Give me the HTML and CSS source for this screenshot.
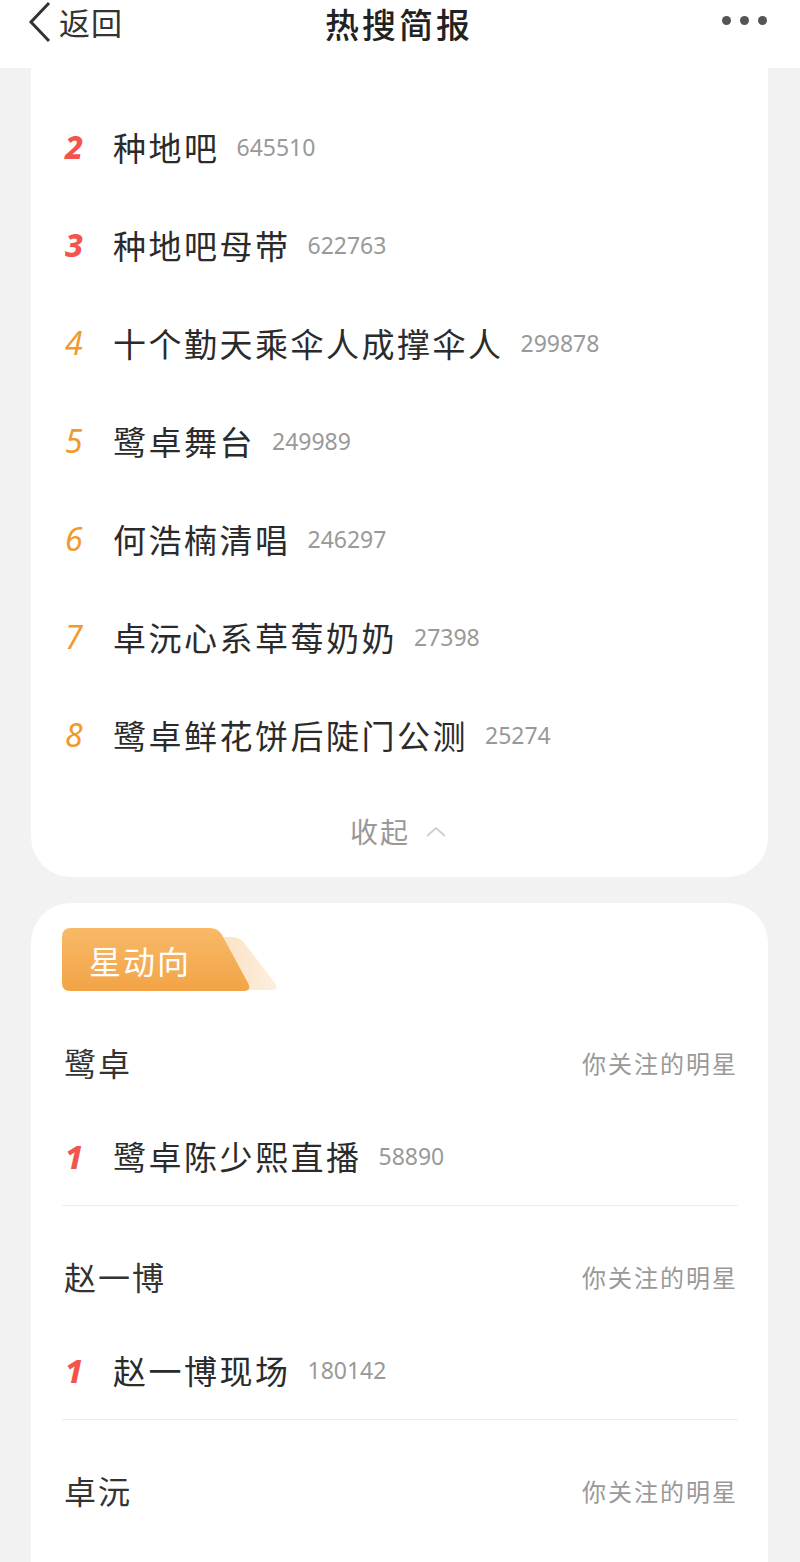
FILE: index.html
```html
<!DOCTYPE html>
<html lang="zh-CN">
<head>
<meta charset="utf-8">
<title>热搜简报</title>
<link rel="stylesheet" href="styles.css">
</head>
<body>
<div class="page">
  <header class="topbar">
    <div class="back">
      <svg class="back-icon" width="24" height="42" viewBox="0 0 24 42"><polyline points="21,2 3,21 21,40" fill="none" stroke="#333" stroke-width="3" stroke-linejoin="miter"/></svg>
      <span class="back-text">返回</span>
    </div>
    <div class="title">热搜简报</div>
    <div class="more"><i></i><i></i><i></i></div>
  </header>

  <section class="card card-top">
    <ul class="hot-list">
      <li class="row"><span class="rank hot">2</span><span class="name">种地吧</span><span class="count">645510</span></li>
      <li class="row"><span class="rank hot">3</span><span class="name">种地吧母带</span><span class="count">622763</span></li>
      <li class="row"><span class="rank warm">4</span><span class="name">十个勤天乘伞人成撑伞人</span><span class="count">299878</span></li>
      <li class="row"><span class="rank warm">5</span><span class="name">鹭卓舞台</span><span class="count">249989</span></li>
      <li class="row"><span class="rank warm">6</span><span class="name">何浩楠清唱</span><span class="count">246297</span></li>
      <li class="row"><span class="rank warm">7</span><span class="name">卓沅心系草莓奶奶</span><span class="count">27398</span></li>
      <li class="row"><span class="rank warm">8</span><span class="name">鹭卓鲜花饼后陡门公测</span><span class="count">25274</span></li>
    </ul>
    <div class="collapse">
      <span class="collapse-text">收起</span>
      <svg class="collapse-icon" width="22" height="12" viewBox="0 0 22 12"><polyline points="2,11 11,3 20,11" fill="none" stroke="#cfcfcf" stroke-width="2"/></svg>
    </div>
  </section>

  <section class="card card-stars">
    <div class="badge">
      <svg class="badge-bg" width="220" height="64" viewBox="0 0 220 64">
        <defs>
          <linearGradient id="bgMain" x1="0" y1="0" x2="0" y2="1">
            <stop offset="0" stop-color="#f8b968"/>
            <stop offset="1" stop-color="#f2a446"/>
          </linearGradient>
          <linearGradient id="bgBack" x1="0" y1="0" x2="1" y2="0">
            <stop offset="0" stop-color="#fbe1c0"/>
            <stop offset="1" stop-color="#fdeedd"/>
          </linearGradient>
        </defs>
        <path d="M150 9 H170 Q178 9 183 16 L213 55 Q218 62 209 62 H150 Z" fill="url(#bgBack)"/>
        <path d="M9 0 H148 Q156 0 160 7 L186 55 Q190 63 181 63 H8 Q0 63 0 55 V9 Q0 0 9 0 Z" fill="url(#bgMain)"/>
      </svg>
      <span class="badge-text">星动向</span>
    </div>

    <div class="star-group">
      <div class="star-head"><span class="star-name">鹭卓</span><span class="star-tag">你关注的明星</span></div>
      <div class="row star-row"><span class="rank hot">1</span><span class="name">鹭卓陈少熙直播</span><span class="count">58890</span></div>
    </div>
    <div class="star-group">
      <div class="star-head"><span class="star-name">赵一博</span><span class="star-tag">你关注的明星</span></div>
      <div class="row star-row"><span class="rank hot">1</span><span class="name">赵一博现场</span><span class="count">180142</span></div>
    </div>
    <div class="star-group">
      <div class="star-head"><span class="star-name">卓沅</span><span class="star-tag">你关注的明星</span></div>
    </div>
  </section>
</div>
</body>
</html>
```

FILE: styles.css
```css
* { box-sizing: border-box; }
html, body { margin: 0; padding: 0; }
body {
  background: #f2f2f2;
  font-family: "Noto Sans CJK SC", "Noto Sans", sans-serif;
  color: #333;
}
.page {
  width: 800px;
  height: 1562px;
  overflow: hidden;
}
.topbar {
  height: 68px;
  background: #fff;
  display: grid;
  grid-template-columns: 1fr auto 1fr;
  align-items: start;
  padding: 1px 33px 0 28px;
}
.back {
  display: flex;
  align-items: center;
  height: 42px;
}
.back-icon { display: block; }
.back-text {
  font-size: 31px;
  line-height: 42px;
  color: #333;
  margin-left: 7px;
  letter-spacing: 1px;
}
.title {
  font-size: 34px;
  line-height: 48px;
  font-weight: 500;
  color: #222;
  letter-spacing: 3px;
  padding-left: 3px;
  margin-top: -1px;
  text-align: center;
}
.more {
  justify-self: end;
  display: flex;
  gap: 9px;
  height: 38px;
  align-items: center;
}
.more i {
  width: 9px;
  height: 9px;
  border-radius: 50%;
  background: #555;
  display: block;
}
.card {
  background: #fff;
  margin: 0 32px 0 31px;
}
.card-top {
  border-radius: 0 0 40px 40px;
  padding: 30px 31px 0 31px;
}
.hot-list {
  list-style: none;
  margin: 0;
  padding: 0;
}
.row {
  height: 98px;
  display: flex;
  align-items: center;
}
.rank {
  width: 51px;
  flex: none;
  padding-left: 3px;
  font-family: "Noto Sans", sans-serif;
  font-style: italic;
  font-size: 32px;
  line-height: 1;
}
.rank.hot { color: #f2554c; font-weight: 800; }
.rank.warm { color: #f09a2e; font-weight: 400; }
.name {
  font-size: 33px;
  letter-spacing: 2.5px;
  color: #2b2b2b;
  line-height: 1;
}
.count {
  font-family: "Noto Sans", sans-serif;
  font-size: 23px;
  color: #999;
  margin-left: 17px;
  line-height: 1;
}
.collapse {
  height: 93px;
  display: flex;
  align-items: center;
  justify-content: center;
  padding-right: 2px;
}
.collapse-text {
  font-size: 28px;
  color: #999;
  letter-spacing: 2px;
}
.collapse-icon {
  margin-left: 15px;
  display: block;
}
.card-stars {
  margin-top: 26px;
  border-radius: 40px 40px 0 0;
  padding: 25px 30px 0 31px;
  height: 700px;
}
.badge {
  position: relative;
  width: 220px;
  height: 64px;
  display: flex;
  align-items: center;
}
.badge-bg {
  position: absolute;
  left: 0;
  top: 0;
}
.badge-text {
  position: relative;
  margin-left: 27px;
  font-size: 32px;
  letter-spacing: 2px;
  color: #fff;
  line-height: 1;
}
.star-group {
  padding-top: 35px;
}
.star-head {
  height: 70px;
  display: flex;
  align-items: center;
  justify-content: space-between;
}
.star-name {
  font-size: 32px;
  letter-spacing: 2px;
  color: #333;
  padding-left: 2px;
}
.star-tag {
  font-size: 24px;
  letter-spacing: 2px;
  color: #999;
}
.star-row {
  margin-top: 11px;
  border-bottom: 1px solid #ececec;
}
```
